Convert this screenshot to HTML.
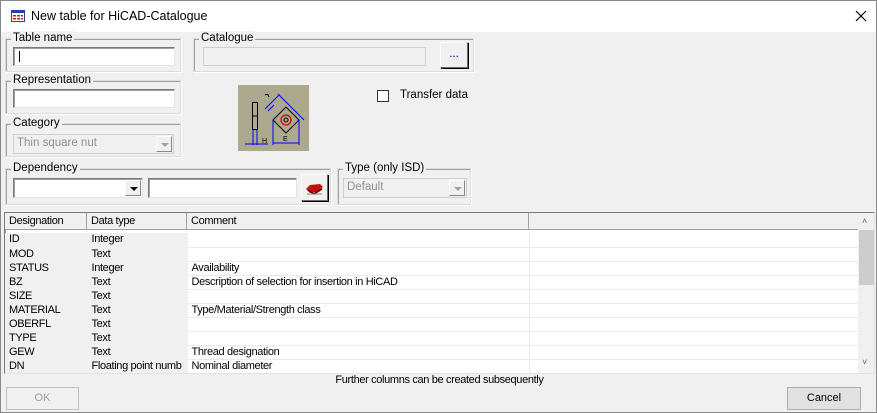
<!DOCTYPE html>
<html><head><style>
*{box-sizing:border-box;margin:0;padding:0}
body{width:877px;height:413px;background:#f0f0f0;font-family:"Liberation Sans",sans-serif;font-size:11.5px;color:#000;position:relative;overflow:hidden;border:1px solid #888}
.a{position:absolute}
.title{left:0;top:0;width:875px;height:31px;background:#fff}
.gb{position:absolute;border:1px solid #dcdcdc;box-shadow:inset 1px 1px 0 #a0a0a0,1px 1px 0 #fff}
.gb span{position:absolute;top:-8px;left:5px;background:#f0f0f0;padding:0 2px;line-height:14px}
.inp{position:absolute;background:#fff;border:1px solid #7a7a7a;border-right-color:#e3e3e3;border-bottom-color:#e3e3e3;box-shadow:inset 1px 1px 0 #a0a0a0}
.dis{background:#f0f0f0;border-color:#cfcfcf}
.btn{position:absolute;background:#f0f0f0;border:1px solid #fff;border-right-color:#696969;border-bottom-color:#696969;box-shadow:1px 1px 0 #000}
.dd{position:absolute;width:16px;top:1px;bottom:1px;right:1px;background:#f0f0f0;border:1px solid #fff;border-right-color:#888;border-bottom-color:#888}
.dd:after{content:"";position:absolute;left:4px;top:6px;border:4px solid transparent;border-top:4px solid #000;border-bottom:0}
.dd.g:after{border-top-color:#a0a0a0}
table{border-collapse:collapse;font-size:11px;letter-spacing:-0.35px}
td{height:14px;padding:0 0 0 4px;white-space:nowrap;border-bottom:1px solid #eaeaea;border-right:1px solid #eaeaea;line-height:13px;overflow:hidden}
td.c1{background:#f0f0f0;border-color:#f0f0f0}
</style></head><body>
<div class="a title"></div>
<svg class="a" style="left:10px;top:9px" width="14" height="12"><rect x="0.5" y="0.5" width="13" height="11" fill="#fff" stroke="#2b3fa8"/><rect x="0" y="0" width="14" height="3" fill="#2b3fa8"/><g fill="#c01818"><rect x="2" y="5" width="3" height="1.5"/><rect x="6" y="5" width="3" height="1.5"/><rect x="10" y="5" width="2" height="1.5"/><rect x="2" y="8" width="3" height="1.5"/><rect x="6" y="8" width="3" height="1.5"/><rect x="10" y="8" width="2" height="1.5"/></g></svg>
<div class="a" style="left:30px;top:8px;font-size:12.5px">New table for HiCAD-Catalogue</div>
<svg class="a" style="left:854px;top:9px" width="12" height="12"><path d="M1 1 L11 11 M11 1 L1 11" stroke="#000" stroke-width="1.2"/></svg>

<div class="gb" style="left:4px;top:37px;width:176px;height:34px"><span>Table name</span></div>
<div class="inp" style="left:12px;top:46px;width:162px;height:19px"><div class="a" style="left:5px;top:3px;width:1px;height:11px;background:#000"></div></div>

<div class="gb" style="left:192px;top:37px;width:281px;height:34px"><span>Catalogue</span></div>
<div class="inp dis" style="left:202px;top:46px;width:223px;height:19px;box-shadow:none"></div>
<div class="btn" style="left:439px;top:41px;width:28px;height:26px;text-align:center;line-height:22px;color:#000080">...</div>

<div class="gb" style="left:4px;top:79px;width:176px;height:34px"><span>Representation</span></div>
<div class="inp" style="left:12px;top:88px;width:162px;height:19px"></div>

<div class="gb" style="left:4px;top:122px;width:176px;height:34px"><span>Category</span></div>
<div class="inp dis" style="left:12px;top:133px;width:161px;height:20px;box-shadow:none;color:#909090;padding:2px 3px">Thin square nut<div class="dd g"></div></div>

<svg class="a" style="left:237px;top:84px" width="71" height="66"><rect width="71" height="66" fill="#aca98f"/>
<g fill="none" stroke="#000" stroke-width="1"><rect x="14.5" y="17.5" width="5" height="27"/><line x1="14" y1="31" x2="20" y2="31"/><path d="M48 22 L61 35 L48 48 L35 35 Z"/><path d="M27 10 q3 -2 4 2"/></g>
<circle cx="48" cy="35" r="5" fill="none" stroke="#d00" stroke-width="1.3"/><circle cx="48" cy="35" r="2" fill="none" stroke="#000"/>
<g fill="none" stroke="#0000ff" stroke-width="1"><line x1="15" y1="44" x2="15" y2="60"/><line x1="19" y1="44" x2="19" y2="60"/><line x1="7" y1="59" x2="30" y2="59"/><line x1="35" y1="35" x2="35" y2="60"/><line x1="61" y1="35" x2="61" y2="60"/><line x1="35" y1="58" x2="61" y2="58"/><line x1="27" y1="24" x2="41" y2="10"/><line x1="40" y1="9" x2="66" y2="35"/><line x1="30" y1="26" x2="36" y2="20"/></g>
<g fill="#000" font-size="7" font-family="Liberation Sans"><text x="24" y="58">H</text><text x="45" y="56">E</text></g></svg>

<div class="inp" style="left:376px;top:89px;width:12px;height:12px;box-shadow:none;border:1px solid #333"></div>
<div class="a" style="left:399px;top:88px">Transfer data</div>

<div class="gb" style="left:4px;top:167px;width:326px;height:37px"><span>Dependency</span></div>
<div class="inp" style="left:12px;top:177px;width:130px;height:20px"><div class="dd"></div></div>
<div class="inp" style="left:147px;top:177px;width:149px;height:20px"></div>
<div class="btn" style="left:300px;top:173px;width:27px;height:27px"><svg width="25" height="25"><path d="M4 14 L8 10 L18 9 L21 12 L16 17 L8 18 Z" fill="#c01010"/><path d="M6 15 L12 19 L20 14" fill="none" stroke="#600" stroke-width="1.5"/><path d="M5 19 L20 19" stroke="#888"/></svg></div>

<div class="gb" style="left:336px;top:167px;width:134px;height:37px"><span>Type (only ISD)</span></div>
<div class="inp dis" style="left:342px;top:177px;width:124px;height:20px;box-shadow:none;color:#909090;padding:2px 3px">Default<div class="dd g"></div></div>

<div class="inp" style="left:3px;top:211px;width:871px;height:162px;background:#fff;overflow:hidden">
<div class="a" style="left:0;top:0;width:854px;height:17px;background:#f0f0f0;font-size:11px;letter-spacing:-0.35px">
<div class="a" style="left:0;top:0;width:82px;height:17px;border-right:1px solid #a0a0a0;border-bottom:1px solid #a0a0a0;padding:2px 4px">Designation</div>
<div class="a" style="left:82px;top:0;width:100px;height:17px;border-right:1px solid #a0a0a0;border-bottom:1px solid #a0a0a0;padding:2px 4px">Data type</div>
<div class="a" style="left:182px;top:0;width:342px;height:17px;border-right:1px solid #a0a0a0;border-bottom:1px solid #a0a0a0;padding:2px 4px">Comment</div>
<div class="a" style="left:524px;top:0;width:330px;height:17px;border-bottom:1px solid #a0a0a0"></div>
</div>
<table class="a" style="left:0;top:20px;width:854px;table-layout:fixed">
<colgroup><col style="width:82px"><col style="width:100px"><col style="width:342px"><col></colgroup>
<tr><td class="c1">ID</td><td class="c1">Integer</td><td></td><td></td></tr>
<tr><td class="c1">MOD</td><td class="c1">Text</td><td></td><td></td></tr>
<tr><td class="c1">STATUS</td><td class="c1">Integer</td><td>Availability</td><td></td></tr>
<tr><td class="c1">BZ</td><td class="c1">Text</td><td>Description of selection for insertion in HiCAD</td><td></td></tr>
<tr><td class="c1">SIZE</td><td class="c1">Text</td><td></td><td></td></tr>
<tr><td class="c1">MATERIAL</td><td class="c1">Text</td><td>Type/Material/Strength class</td><td></td></tr>
<tr><td class="c1">OBERFL</td><td class="c1">Text</td><td></td><td></td></tr>
<tr><td class="c1">TYPE</td><td class="c1">Text</td><td></td><td></td></tr>
<tr><td class="c1">GEW</td><td class="c1">Text</td><td>Thread designation</td><td></td></tr>
<tr><td class="c1">DN</td><td class="c1" style="padding-left:4px">Floating point numb</td><td>Nominal diameter</td><td></td></tr>
</table>
<div class="a" style="left:853px;top:0;width:17px;height:160px;background:#f0f0f0">
<div class="a" style="left:4px;top:3px;font-size:9px;color:#606060">˄</div>
<div class="a" style="left:1px;top:17px;width:15px;height:55px;background:#cdcdcd"></div>
<div class="a" style="left:4px;top:144px;font-size:9px;color:#606060">˅</div>
</div>
</div>

<div class="a" style="left:0;width:877px;top:373px;text-align:center;font-size:11px;letter-spacing:-0.35px">Further columns can be created subsequently</div>
<div class="a" style="left:5px;top:386px;width:73px;height:23px;border:1px solid #bfbfbf;background:#f0f0f0;color:#a0a0a0;text-align:center;line-height:21px;font-size:11px">OK</div>
<div class="a" style="left:786px;top:386px;width:74px;height:23px;border:1px solid #adadad;background:#e1e1e1;text-align:center;line-height:21px;font-size:11px">Cancel</div>
</body></html>
